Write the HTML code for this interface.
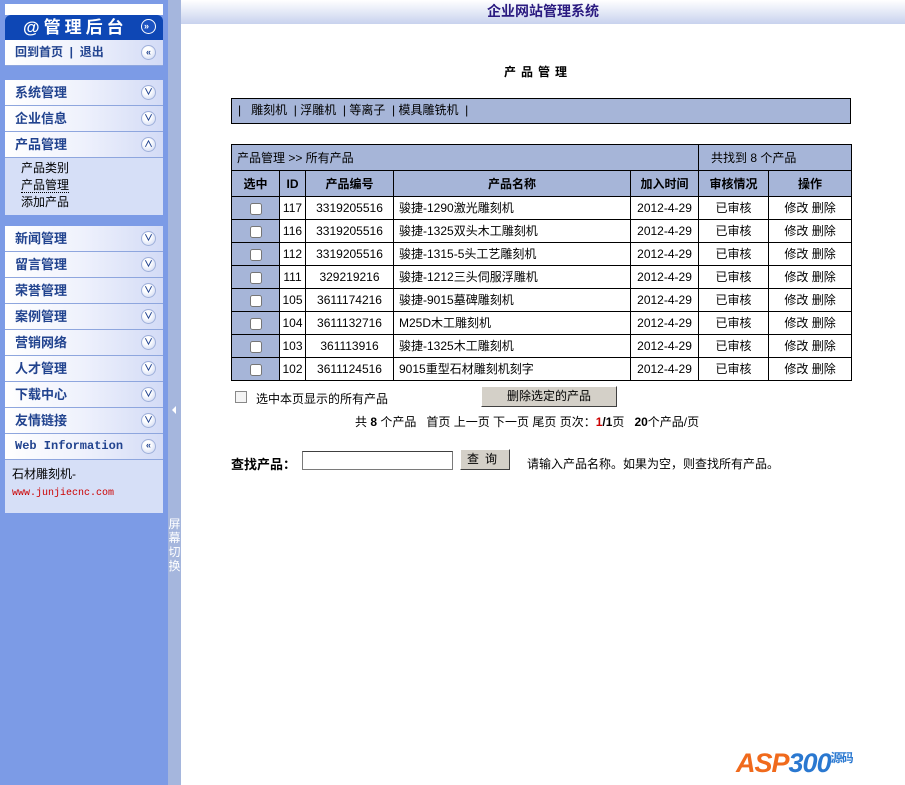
<!DOCTYPE html>
<html><head><meta charset="utf-8"><style>
*{margin:0;padding:0;box-sizing:border-box}
body{width:905px;height:785px;overflow:hidden;background:#fff;font-family:"Liberation Sans","Noto Sans CJK SC",sans-serif;font-size:12px;color:#000;position:relative}
.side{position:absolute;left:0;top:0;width:168px;height:785px;background:#7c9be6}
.split{position:absolute;left:168px;top:0;width:13px;height:785px;background:#a5b6dd}
.split .t{position:absolute;left:0;top:517px;width:13px;font-size:12px;line-height:14px;color:#fff;text-align:center}
.split .a{position:absolute;left:4px;top:406px;width:0;height:0;border-top:4px solid transparent;border-bottom:4px solid transparent;border-right:4px solid #fff}
.p{position:absolute;left:5px;width:158px}
.it{height:26px;background:linear-gradient(90deg,#fff 0%,#eef1fc 50%,#d3dbf6 100%);border-bottom:1px solid #8ea6de;position:relative;font-weight:bold;color:#21438f;font-size:13px;line-height:25px;padding-left:10px}
.ic{position:absolute;right:7px;top:5px;width:15px;height:15px;border-radius:50%;background:radial-gradient(circle at 40% 35%,#fff 30%,#c7d2f0 100%);border:1px solid #9fb0da;font-size:9px;line-height:13px;text-align:center;color:#21438f;font-weight:bold}
.sub{background:#d6dff7;padding:2px 0 4px 16px;font-size:12px;line-height:17px;color:#000}
.main{position:absolute;left:181px;top:0;width:724px;height:785px}
.hdr{height:24px;background:linear-gradient(#fff,#c8d2ee);text-align:center;font-weight:bold;color:#2a1a80;font-size:14px;line-height:22px}
table{border-collapse:collapse;table-layout:fixed}
td{border:1px solid #000;text-align:center;height:23px;font-size:12px;line-height:14px;padding:0;white-space:nowrap;overflow:hidden}
td input{width:12px;height:12px;vertical-align:middle;margin:0}
.l{text-align:left;padding-left:5px}
.b{background:#a6b5d8}
</style></head><body>
<div class="side">
 <div class="p" style="top:4px;height:11px;background:#fff"></div>
 <div class="p" style="top:15px;height:25px;background:#0e47b5;color:#fff;font-weight:bold;font-size:17px;line-height:25px;padding-left:18px;letter-spacing:4px;border-radius:6px 6px 0 0">@管理后台<span class="ic" style="top:4px;background:#1b53c2;color:#fff;border-color:#fff">&#187;</span></div>
 <div class="p it" style="top:40px;height:26px;font-size:12px">回到首页 &nbsp;| &nbsp;退出<span class="ic">&#171;</span></div>
 <div class="p" style="top:80px">
  <div class="it">系统管理<span class="ic">&#8744;</span></div>
  <div class="it">企业信息<span class="ic">&#8744;</span></div>
  <div class="it">产品管理<span class="ic">&#8743;</span></div>
  <div class="sub">产品类别<br><span style="border-bottom:1px dotted #000">产品管理</span><br>添加产品</div>
 </div>
 <div class="p" style="top:226px">
  <div class="it">新闻管理<span class="ic">&#8744;</span></div>
  <div class="it">留言管理<span class="ic">&#8744;</span></div>
  <div class="it">荣誉管理<span class="ic">&#8744;</span></div>
  <div class="it">案例管理<span class="ic">&#8744;</span></div>
  <div class="it">营销网络<span class="ic">&#8744;</span></div>
  <div class="it">人才管理<span class="ic">&#8744;</span></div>
  <div class="it">下载中心<span class="ic">&#8744;</span></div>
  <div class="it">友情链接<span class="ic">&#8744;</span></div>
  <div class="it" style="font-family:'Liberation Mono',monospace;font-size:12px">Web Information<span class="ic">&#171;</span></div>
  <div class="sub" style="padding:6px 0 10px 7px;height:53px">石材雕刻机-<br><span style="font-family:'Liberation Mono',monospace;font-size:10px;color:#c00">www.junjiecnc.com</span></div>
 </div>
</div>
<div class="split"><div class="a"></div><div class="t">屏<br>幕<br>切<br>换</div></div>
<div class="main">
 <div class="hdr">企业网站管理系统</div>
 <div style="position:absolute;left:323px;top:63px;font-weight:bold;letter-spacing:5px;font-size:12px">产品管理</div>
 <div style="position:absolute;left:50px;top:98px;width:620px;height:26px;background:#a6b5d8;border:1px solid #000;line-height:22px;padding-left:6px">|&nbsp;&nbsp; 雕刻机 &nbsp;| 浮雕机 &nbsp;| 等离子 &nbsp;| 模具雕铣机 &nbsp;|</div>
 <table style="position:absolute;left:50px;top:144px;width:620px">
  <colgroup><col style="width:48px"><col style="width:26px"><col style="width:88px"><col style="width:237px"><col style="width:68px"><col style="width:70px"><col style="width:83px"></colgroup>
  <tr class="b"><td colspan="5" class="l" style="height:26px">产品管理 &gt;&gt; 所有产品</td><td colspan="2" class="l" style="padding-left:12px">共找到 8 个产品</td></tr>
  <tr class="b" style="font-weight:bold"><td style="height:26px">选中</td><td>ID</td><td>产品编号</td><td>产品名称</td><td>加入时间</td><td>审核情况</td><td>操作</td></tr>
  <tr><td class="b"><input type="checkbox"></td><td>117</td><td>3319205516</td><td class="l">骏捷-1290激光雕刻机</td><td>2012-4-29</td><td>已审核</td><td>修改 删除</td></tr>
  <tr><td class="b"><input type="checkbox"></td><td>116</td><td>3319205516</td><td class="l">骏捷-1325双头木工雕刻机</td><td>2012-4-29</td><td>已审核</td><td>修改 删除</td></tr>
  <tr><td class="b"><input type="checkbox"></td><td>112</td><td>3319205516</td><td class="l">骏捷-1315-5头工艺雕刻机</td><td>2012-4-29</td><td>已审核</td><td>修改 删除</td></tr>
  <tr><td class="b"><input type="checkbox"></td><td>111</td><td>329219216</td><td class="l">骏捷-1212三头伺服浮雕机</td><td>2012-4-29</td><td>已审核</td><td>修改 删除</td></tr>
  <tr><td class="b"><input type="checkbox"></td><td>105</td><td>3611174216</td><td class="l">骏捷-9015墓碑雕刻机</td><td>2012-4-29</td><td>已审核</td><td>修改 删除</td></tr>
  <tr><td class="b"><input type="checkbox"></td><td>104</td><td>3611132716</td><td class="l">M25D木工雕刻机</td><td>2012-4-29</td><td>已审核</td><td>修改 删除</td></tr>
  <tr><td class="b"><input type="checkbox"></td><td>103</td><td>361113916</td><td class="l">骏捷-1325木工雕刻机</td><td>2012-4-29</td><td>已审核</td><td>修改 删除</td></tr>
  <tr><td class="b"><input type="checkbox"></td><td>102</td><td>3611124516</td><td class="l">9015重型石材雕刻机刻字</td><td>2012-4-29</td><td>已审核</td><td>修改 删除</td></tr>
 </table>
 <div style="position:absolute;left:54px;top:391px;width:12px;height:12px;border:1px solid #888;background:#f4f4f4"></div>
 <div style="position:absolute;left:75px;top:390px">选中本页显示的所有产品</div>
 <div style="position:absolute;left:300px;top:386px;width:136px;height:21px;background:#d4d0c8;border:1px solid;border-color:#fff #404040 #404040 #fff;text-align:center;line-height:19px">删除选定的产品</div>
 <div style="position:absolute;left:174px;top:413px">共 <b>8</b> 个产品 &nbsp; 首页 上一页 下一页 尾页 页次：<b style="color:#c00">1</b><b>/1</b>页 &nbsp; <b>20</b>个产品/页</div>
 <div style="position:absolute;left:50px;top:454px;font-weight:bold;font-size:13px">查找产品：</div>
 <div style="position:absolute;left:121px;top:451px;width:151px;height:19px;border:1px solid #7a7a7a;border-top-color:#404040"></div>
 <div style="position:absolute;left:279px;top:449px;width:50px;height:21px;background:#d4d0c8;border:1px solid;border-color:#fff #404040 #404040 #fff;text-align:center;line-height:18px;letter-spacing:6px">查询</div>
 <div style="position:absolute;left:346px;top:455px">请输入产品名称。如果为空，则查找所有产品。</div>
 <div style="position:absolute;left:555px;top:748px;font-weight:bold;font-style:italic;font-size:27px;color:#f06a1c;letter-spacing:-1px">ASP<span style="color:#2a78d0">300</span><span style="font-size:12px;color:#2a78d0;font-style:normal;position:relative;top:-10px">源码</span></div>
</div>
</body></html>
